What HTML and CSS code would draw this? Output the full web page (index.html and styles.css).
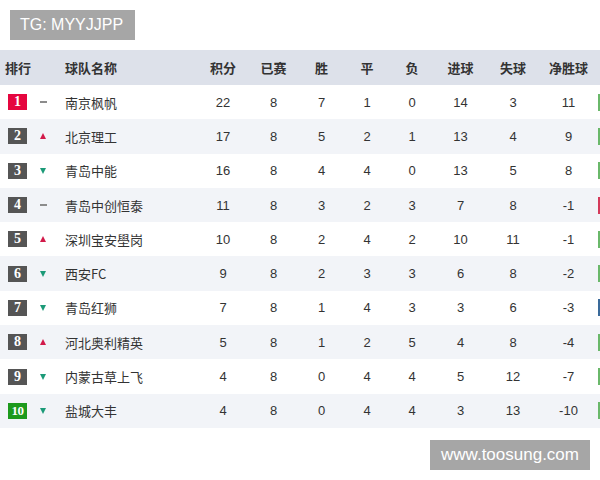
FILE: index.html
```html
<!DOCTYPE html>
<html lang="zh">
<head>
<meta charset="utf-8">
<link rel="stylesheet" href="styles.css">
</head>
<body>
<div class="page">
  <div class="tg">TG: MYYJJPP</div>
  <div class="table">
    <div class="row head">
      <div class="c-rank">排行</div><div></div><div class="c-name">球队名称</div>
      <div class="num">积分</div><div class="num">已赛</div><div class="num">胜</div><div class="num">平</div><div class="num">负</div><div class="num">进球</div><div class="num">失球</div><div class="num">净胜球</div><div></div>
    </div>
    <div class="row">
      <div class="c-rank"><span class="badge red">1</span></div><div class="c-trend"><span class="dash"></span></div><div class="c-name">南京枫帆</div>
      <div class="num">22</div><div class="num">8</div><div class="num">7</div><div class="num">1</div><div class="num">0</div><div class="num">14</div><div class="num">3</div><div class="num">11</div><div class="c-bar"><span class="bar g"></span></div>
    </div>
    <div class="row alt">
      <div class="c-rank"><span class="badge">2</span></div><div class="c-trend"><span class="up"></span></div><div class="c-name">北京理工</div>
      <div class="num">17</div><div class="num">8</div><div class="num">5</div><div class="num">2</div><div class="num">1</div><div class="num">13</div><div class="num">4</div><div class="num">9</div><div class="c-bar"><span class="bar g"></span></div>
    </div>
    <div class="row">
      <div class="c-rank"><span class="badge">3</span></div><div class="c-trend"><span class="down"></span></div><div class="c-name">青岛中能</div>
      <div class="num">16</div><div class="num">8</div><div class="num">4</div><div class="num">4</div><div class="num">0</div><div class="num">13</div><div class="num">5</div><div class="num">8</div><div class="c-bar"><span class="bar g"></span></div>
    </div>
    <div class="row alt">
      <div class="c-rank"><span class="badge">4</span></div><div class="c-trend"><span class="dash"></span></div><div class="c-name">青岛中创恒泰</div>
      <div class="num">11</div><div class="num">8</div><div class="num">3</div><div class="num">2</div><div class="num">3</div><div class="num">7</div><div class="num">8</div><div class="num">-1</div><div class="c-bar"><span class="bar r"></span></div>
    </div>
    <div class="row">
      <div class="c-rank"><span class="badge">5</span></div><div class="c-trend"><span class="up"></span></div><div class="c-name">深圳宝安壆岗</div>
      <div class="num">10</div><div class="num">8</div><div class="num">2</div><div class="num">4</div><div class="num">2</div><div class="num">10</div><div class="num">11</div><div class="num">-1</div><div class="c-bar"><span class="bar g"></span></div>
    </div>
    <div class="row alt">
      <div class="c-rank"><span class="badge">6</span></div><div class="c-trend"><span class="down"></span></div><div class="c-name">西安FC</div>
      <div class="num">9</div><div class="num">8</div><div class="num">2</div><div class="num">3</div><div class="num">3</div><div class="num">6</div><div class="num">8</div><div class="num">-2</div><div class="c-bar"><span class="bar g"></span></div>
    </div>
    <div class="row">
      <div class="c-rank"><span class="badge">7</span></div><div class="c-trend"><span class="down"></span></div><div class="c-name">青岛红狮</div>
      <div class="num">7</div><div class="num">8</div><div class="num">1</div><div class="num">4</div><div class="num">3</div><div class="num">3</div><div class="num">6</div><div class="num">-3</div><div class="c-bar"><span class="bar b"></span></div>
    </div>
    <div class="row alt">
      <div class="c-rank"><span class="badge">8</span></div><div class="c-trend"><span class="up"></span></div><div class="c-name">河北奥利精英</div>
      <div class="num">5</div><div class="num">8</div><div class="num">1</div><div class="num">2</div><div class="num">5</div><div class="num">4</div><div class="num">8</div><div class="num">-4</div><div class="c-bar"><span class="bar g"></span></div>
    </div>
    <div class="row">
      <div class="c-rank"><span class="badge">9</span></div><div class="c-trend"><span class="down"></span></div><div class="c-name">内蒙古草上飞</div>
      <div class="num">4</div><div class="num">8</div><div class="num">0</div><div class="num">4</div><div class="num">4</div><div class="num">5</div><div class="num">12</div><div class="num">-7</div><div class="c-bar"><span class="bar g"></span></div>
    </div>
    <div class="row alt">
      <div class="c-rank"><span class="badge green">10</span></div><div class="c-trend"><span class="down"></span></div><div class="c-name">盐城大丰</div>
      <div class="num">4</div><div class="num">8</div><div class="num">0</div><div class="num">4</div><div class="num">4</div><div class="num">3</div><div class="num">13</div><div class="num">-10</div><div class="c-bar"><span class="bar g"></span></div>
    </div>
  </div>
  <div class="footer">
    <div class="wm">www.toosung.com</div>
  </div>
</div>
</body>
</html>
```
FILE: styles.css
```css
* { box-sizing: border-box; }
html, body {
  margin: 0;
  padding: 0;
  background: #fff;
  width: 600px;
  height: 480px;
  overflow: hidden;
}
body {
  font-family: "Liberation Sans", "Noto Sans CJK SC", sans-serif;
  color: #333;
  font-size: 13px;
}
.page {
  display: flex;
  flex-direction: column;
}
.tg {
  margin: 10px 0 0 10px;
  width: 125px;
  height: 30px;
  background: #a6a6a6;
  color: #fff;
  font-size: 16px;
  line-height: 30px;
  padding-left: 10px;
}
.table {
  margin-top: 10px;
  width: 600px;
}
.row {
  display: grid;
  grid-template-columns: 34px 31px 132px 52px 49px 47px 44px 46px 51px 54px 57px 3px;
  align-items: center;
  height: 34.3px;
  background: #fff;
}
.row.alt { background: #f2f4f8; }
.row.head {
  height: 35px;
  background: #dde1ea;
  font-weight: bold;
  font-family: "Noto Sans CJK SC", sans-serif;
  color: #333;
}
.head .c-rank { padding-left: 5px; }
.c-rank { padding-left: 8px; display: flex; }
.c-trend { display: flex; justify-content: flex-start; padding-left: 6px; }
.c-name { font-family: "Noto Sans CJK SC", sans-serif; }
.num { text-align: center; }
.badge {
  display: inline-block;
  width: 19px;
  height: 16px;
  line-height: 16px;
  text-align: center;
  background: #555;
  color: #fff;
  font-family: "Liberation Serif", serif;
  font-weight: bold;
  font-size: 14px;
}
.badge.red { background: #e5063f; }
.badge.green { background: #1d9a1d; font-size: 13px; letter-spacing: -0.5px; }
.dash {
  display: block;
  width: 7px;
  height: 2px;
  background: #8c8c8c;
}
.up {
  display: block;
  width: 0;
  height: 0;
  border-left: 3.5px solid transparent;
  border-right: 3.5px solid transparent;
  border-bottom: 6px solid #d21a4a;
}
.down {
  display: block;
  width: 0;
  height: 0;
  border-left: 3.5px solid transparent;
  border-right: 3.5px solid transparent;
  border-top: 6px solid #1c9a78;
}
.c-bar { display: flex; justify-content: flex-end; }
.bar {
  display: block;
  width: 2px;
  height: 17px;
}
.bar.g { background: #6ab86a; }
.bar.r { background: #d43a5a; }
.bar.b { background: #3a6a9a; }
.footer {
  display: flex;
  justify-content: flex-end;
  padding: 12px 10px 0 0;
}
.wm {
  width: 160px;
  height: 30px;
  background: #a6a6a6;
  color: #fff;
  font-size: 17px;
  line-height: 30px;
  text-align: center;
}
```
